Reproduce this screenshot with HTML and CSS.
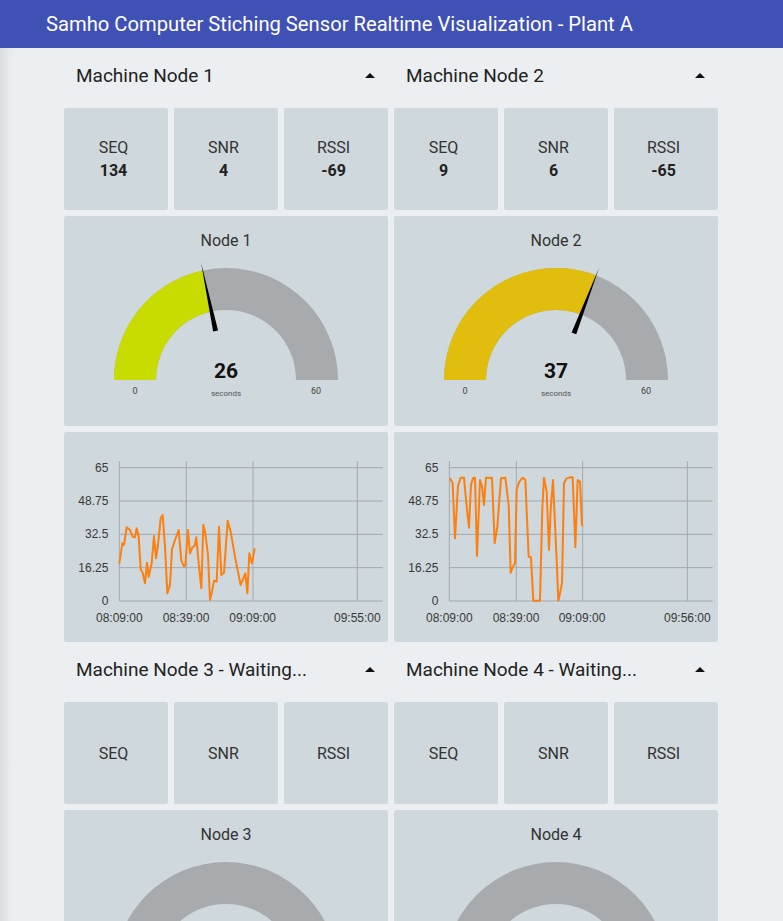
FILE: index.html
```html
<!DOCTYPE html>
<html lang="en">
<head>
<meta charset="utf-8">
<title>Samho Dashboard</title>
<link rel="stylesheet" href="styles.css">
</head>
<body>
<header class="topbar">
  <h1 class="topbar-title">Samho Computer Stiching Sensor Realtime Visualization - Plant A</h1>
</header>
<main class="page">
  <div class="layout">

    <section class="group">
      <div class="group-head"><span class="group-title">Machine Node 1</span><span class="caret"></span></div>
      <div class="group-body">
        <div class="tile"><div class="tile-label">SEQ</div><div class="tile-value">134</div></div>
        <div class="tile"><div class="tile-label">SNR</div><div class="tile-value">4</div></div>
        <div class="tile"><div class="tile-label">RSSI</div><div class="tile-value">-69</div></div>
        <div class="card gauge-card">
          <div class="card-title">Node 1</div>
          <svg class="gauge" viewBox="0 35 324 175">
            <path class="arc-bg" d="M 50 164 A 112 112 0 0 1 274 164 L 232 164 A 70 70 0 0 0 92 164 Z"/>
            <path class="arc-lime" d="M 50 164 A 112 112 0 0 1 138.71 54.45 L 147.45 95.53 A 70 70 0 0 0 92 164 Z"/>
            <polygon class="needle" points="154.05,114.58 149.15,115.62 137.05,46.63"/>
            <text class="g-value" x="162" y="162">26</text>
            <text class="g-unit" x="162" y="180">seconds</text>
            <text class="g-min" x="71" y="178">0</text>
            <text class="g-max" x="252" y="178">60</text>
          </svg>
        </div>
        <div class="card chart-card">
          <svg class="chart" viewBox="12 6 972 630">
            <g class="grid">
              <line x1="178" y1="113" x2="968" y2="113"/>
              <line x1="178" y1="213" x2="968" y2="213"/>
              <line x1="178" y1="313" x2="968" y2="313"/>
              <line x1="178" y1="413" x2="968" y2="413"/>
              <line x1="178" y1="513" x2="968" y2="513"/>
              <line x1="178" y1="93" x2="178" y2="513"/>
              <line x1="379" y1="93" x2="379" y2="513"/>
              <line x1="579" y1="93" x2="579" y2="513"/>
              <line x1="892" y1="93" x2="892" y2="513"/>
            </g>
            <g class="ylab">
              <text x="145" y="125">65</text>
              <text x="145" y="226">48.75</text>
              <text x="145" y="325">32.5</text>
              <text x="145" y="426">16.25</text>
              <text x="145" y="525">0</text>
            </g>
            <g class="xlab">
              <text x="178" y="576">08:09:00</text>
              <text x="378" y="576">08:39:00</text>
              <text x="578" y="576">09:09:00</text>
              <text x="892" y="576">09:55:00</text>
            </g>
            <polyline class="series" points="178,400 187,340 192,345 200,292 210,300 218,320 225,322 230,295 236,320 242,418 248,428 255,460 261,398 266,440 275,400 282,318 288,385 294,345 302,265 308,255 315,350 322,490 330,465 336,358 345,330 356,300 364,392 372,410 376,405 384,300 390,370 397,352 404,348 409,322 416,400 424,475 430,285 436,310 444,375 450,510 456,485 462,452 470,455 477,290 484,435 492,428 503,272 512,305 525,380 542,465 556,430 562,490 568,370 576,400 584,355"/>
          </svg>
        </div>
      </div>
    </section>

    <section class="group">
      <div class="group-head"><span class="group-title">Machine Node 2</span><span class="caret"></span></div>
      <div class="group-body">
        <div class="tile"><div class="tile-label">SEQ</div><div class="tile-value">9</div></div>
        <div class="tile"><div class="tile-label">SNR</div><div class="tile-value">6</div></div>
        <div class="tile"><div class="tile-label">RSSI</div><div class="tile-value">-65</div></div>
        <div class="card gauge-card">
          <div class="card-title">Node 2</div>
          <svg class="gauge" viewBox="0 35 324 175">
            <path class="arc-bg" d="M 50 164 A 112 112 0 0 1 274 164 L 232 164 A 70 70 0 0 0 92 164 Z"/>
            <path class="arc-gold" d="M 50 164 A 112 112 0 0 1 202.14 59.44 L 187.09 98.65 A 70 70 0 0 0 92 164 Z"/>
            <polygon class="needle" points="182.25,118.22 177.59,116.42 205.01,51.97"/>
            <text class="g-value" x="162" y="162">37</text>
            <text class="g-unit" x="162" y="180">seconds</text>
            <text class="g-min" x="71" y="178">0</text>
            <text class="g-max" x="252" y="178">60</text>
          </svg>
        </div>
        <div class="card chart-card">
          <svg class="chart" viewBox="12 6 972 630">
            <g class="grid">
              <line x1="178" y1="113" x2="968" y2="113"/>
              <line x1="178" y1="213" x2="968" y2="213"/>
              <line x1="178" y1="313" x2="968" y2="313"/>
              <line x1="178" y1="413" x2="968" y2="413"/>
              <line x1="178" y1="513" x2="968" y2="513"/>
              <line x1="178" y1="93" x2="178" y2="513"/>
              <line x1="379" y1="93" x2="379" y2="513"/>
              <line x1="578" y1="93" x2="578" y2="513"/>
              <line x1="892" y1="93" x2="892" y2="513"/>
            </g>
            <g class="ylab">
              <text x="145" y="125">65</text>
              <text x="145" y="226">48.75</text>
              <text x="145" y="325">32.5</text>
              <text x="145" y="426">16.25</text>
              <text x="145" y="525">0</text>
            </g>
            <g class="xlab">
              <text x="178" y="576">08:09:00</text>
              <text x="378" y="576">08:39:00</text>
              <text x="576" y="576">09:09:00</text>
              <text x="892" y="576">09:56:00</text>
            </g>
            <polyline class="series" points="180,145 188,160 195,325 204,168 212,143 222,143 230,230 237,293 243,163 250,143 255,143 261,378 270,150 276,170 282,225 288,143 306,143 314,340 322,290 333,145 346,143 356,225 362,428 370,408 375,400 380,180 388,155 398,143 406,150 416,380 423,382 430,512 450,512 457,235 462,143 470,185 477,360 482,240 489,150 500,390 505,512 512,480 516,460 522,160 530,145 540,142 548,142 556,352 563,150 570,155 576,285 580,287"/>
          </svg>
        </div>
      </div>
    </section>

    <section class="group">
      <div class="group-head"><span class="group-title">Machine Node 3 - Waiting...</span><span class="caret"></span></div>
      <div class="group-body">
        <div class="tile"><div class="tile-label">SEQ</div></div>
        <div class="tile"><div class="tile-label">SNR</div></div>
        <div class="tile"><div class="tile-label">RSSI</div></div>
        <div class="card gauge-card">
          <div class="card-title">Node 3</div>
          <svg class="gauge" viewBox="0 35 324 175">
            <path class="arc-bg" d="M 50 164 A 112 112 0 0 1 274 164 L 232 164 A 70 70 0 0 0 92 164 Z"/>
          </svg>
        </div>
      </div>
    </section>

    <section class="group">
      <div class="group-head"><span class="group-title">Machine Node 4 - Waiting...</span><span class="caret"></span></div>
      <div class="group-body">
        <div class="tile"><div class="tile-label">SEQ</div></div>
        <div class="tile"><div class="tile-label">SNR</div></div>
        <div class="tile"><div class="tile-label">RSSI</div></div>
        <div class="card gauge-card">
          <div class="card-title">Node 4</div>
          <svg class="gauge" viewBox="0 35 324 175">
            <path class="arc-bg" d="M 50 164 A 112 112 0 0 1 274 164 L 232 164 A 70 70 0 0 0 92 164 Z"/>
          </svg>
        </div>
      </div>
    </section>

  </div>
</main>
</body>
</html>
```
FILE: styles.css
```css
* { box-sizing: border-box; }
html, body {
  margin: 0;
  padding: 0;
  height: 100%;
  overflow: hidden;
}
body {
  font-family: Roboto, "Noto Sans", "Liberation Sans", sans-serif;
  background: #eceff1;
  color: #333;
}
.topbar {
  height: 48px;
  background: #3f51b5;
  display: flex;
  align-items: center;
  padding-left: 46px;
}
.topbar-title {
  margin: 0;
  font-size: 20.2px;
  font-weight: 400;
  color: #fff;
  line-height: 48px;
  white-space: nowrap;
}
.page {
  height: calc(100% - 48px);
  background: linear-gradient(to right, #d9dde0 0px, #e3e6e9 6px, #eaedef 11px, #eceff1 14px);
  display: flex;
  justify-content: flex-start;
  padding-left: 64px;
}
.layout {
  display: grid;
  grid-template-columns: 324px 324px;
  column-gap: 6px;
  align-content: start;
}
.group-head {
  height: 60px;
  padding: 16px 12px 0;
  display: flex;
  justify-content: space-between;
  align-items: flex-start;
}
.group-title {
  font-size: 19px;
  line-height: 24px;
  color: #222;
}
.caret {
  width: 0;
  height: 0;
  margin-top: 9px;
  margin-right: 1px;
  border-left: 5.5px solid transparent;
  border-right: 5.5px solid transparent;
  border-bottom: 5px solid #111;
}
.group-body {
  display: grid;
  grid-template-columns: repeat(3, 104px);
  gap: 6px;
}
.tile {
  height: 102px;
  padding-right: 5px;
  background: #cfd8dc;
  border-radius: 2px;
  display: flex;
  flex-direction: column;
  align-items: center;
  justify-content: center;
}
.tile-label {
  font-size: 16px;
  line-height: 23px;
  color: #333;
}
.tile-value {
  font-size: 16px;
  line-height: 23px;
  font-weight: 700;
  color: #222;
}
.card {
  grid-column: 1 / -1;
  height: 210px;
  background: #cfd8dc;
  border-radius: 2px;
}
.gauge-card {
  padding-top: 15px;
}
.card-title {
  text-align: center;
  font-size: 16px;
  line-height: 20px;
  color: #333;
}
.gauge {
  display: block;
  width: 324px;
  height: 175px;
}
.arc-bg { fill: #a8abae; }
.arc-lime { fill: #c8dc02; }
.arc-gold { fill: #e1bd0e; }
.needle { fill: #000; }
.gauge text {
  font-family: Roboto, "Liberation Sans", sans-serif;
  text-anchor: middle;
}
.g-value {
  font-size: 21px;
  font-weight: 700;
  fill: #111;
}
.g-unit {
  font-size: 8px;
  fill: #555;
}
.g-min, .g-max {
  font-size: 9px;
  fill: #444;
}
.chart {
  display: block;
  width: 324px;
  height: 210px;
}
.grid line {
  stroke: #a3a9ad;
  stroke-width: 3;
}
.chart text {
  font-family: "Liberation Sans", Arial, sans-serif;
  font-size: 36px;
  fill: #383838;
}
.ylab text { text-anchor: end; }
.xlab text { text-anchor: middle; }
.series {
  fill: none;
  stroke: #ff7f0e;
  stroke-width: 6;
  stroke-linejoin: round;
}
```
